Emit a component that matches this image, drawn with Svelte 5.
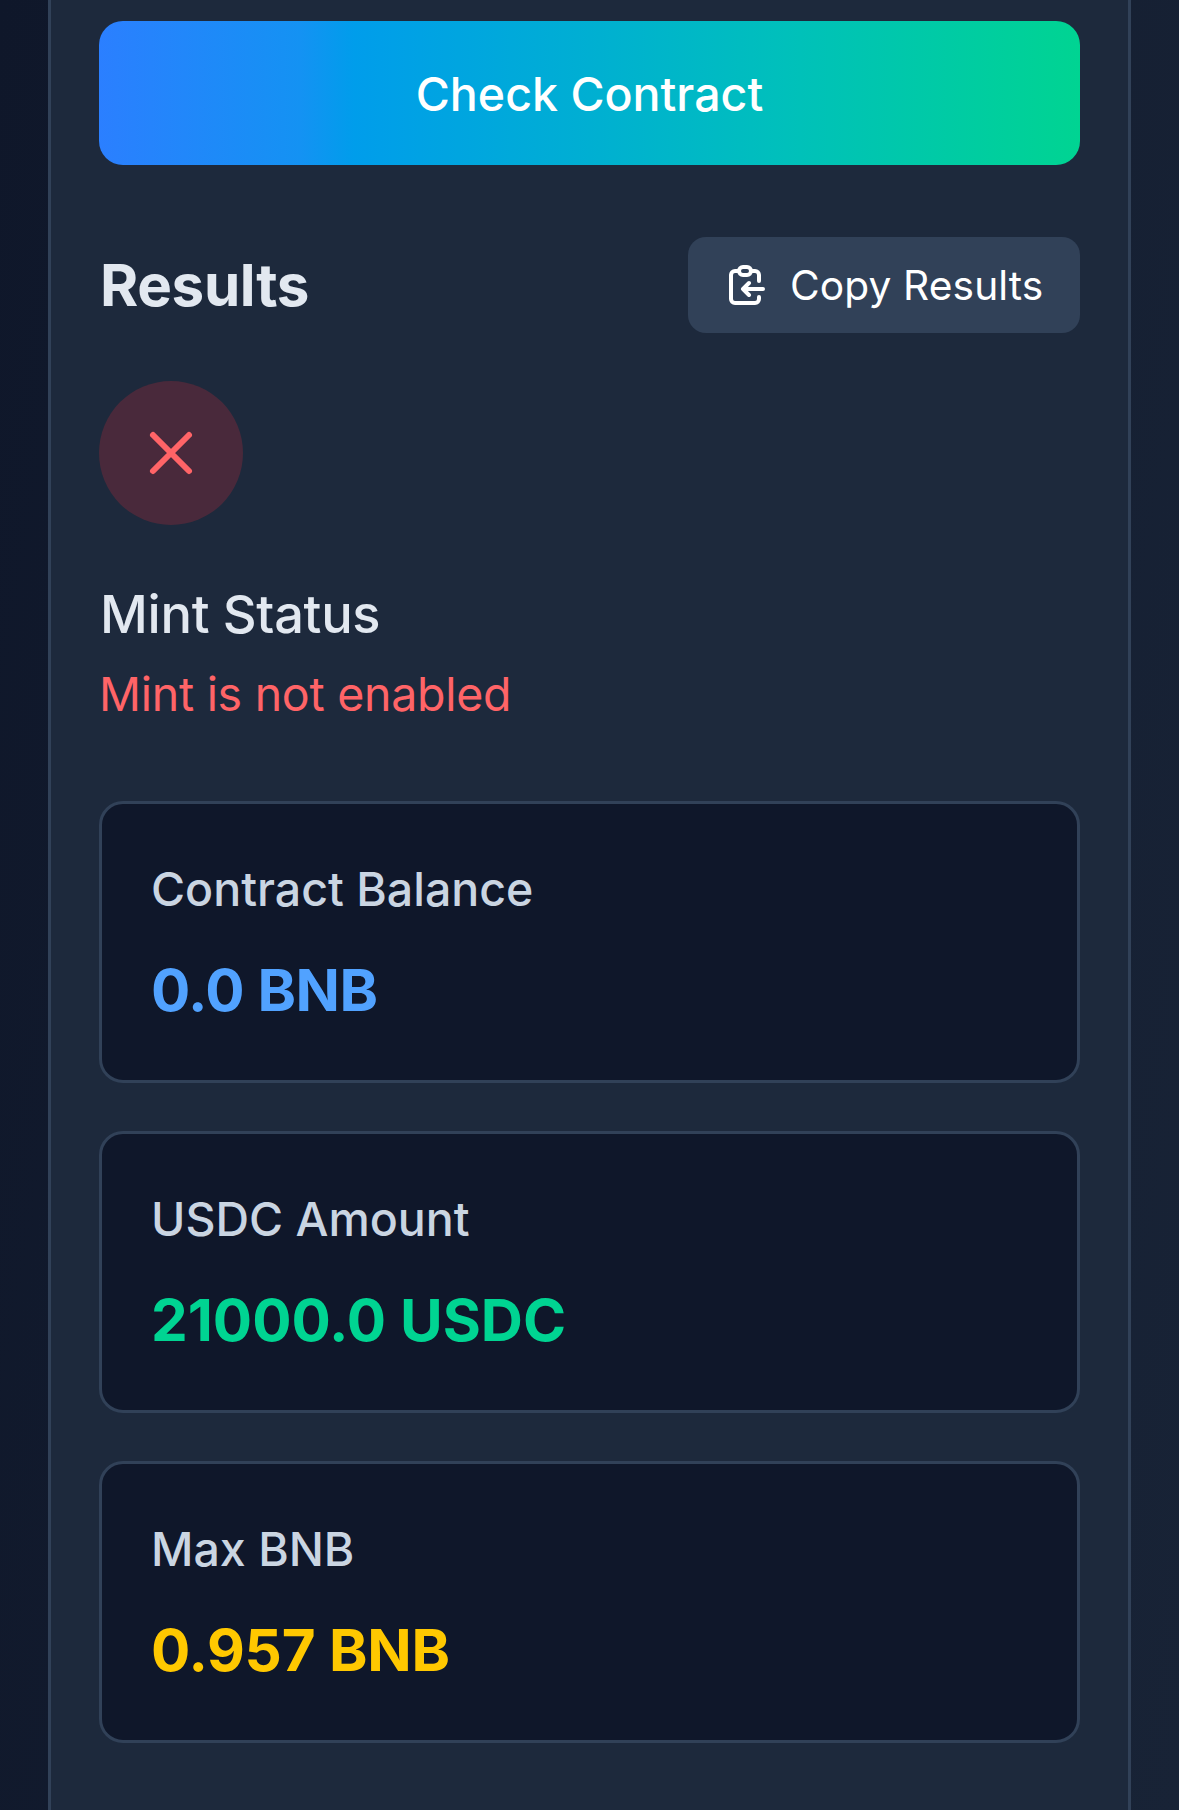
<script>
  const stats = [
    { label: 'Contract Balance', value: '0.0 BNB', tone: 'blue' },
    { label: 'USDC Amount', value: '21000.0 USDC', tone: 'green' },
    { label: 'Max BNB', value: '0.957 BNB', tone: 'yellow' },
  ];
</script>

<div class="page">
  <main class="panel">
    <button class="check">Check Contract</button>

    <div class="head">
      <h2>Results</h2>
      <button class="copy">
        <svg viewBox="0 0 24 24" width="48" height="48" aria-hidden="true">
          <path d="M9 5H7a2 2 0 0 0-2 2v12a2 2 0 0 0 2 2h10a2 2 0 0 0 2-2v-1" />
          <path d="M19 10V7a2 2 0 0 0-2-2h-2" />
          <rect x="9" y="3" width="6" height="4" rx="2" />
          <path d="M21 14H11M14 11l-3 3 3 3" />
        </svg>
        <span>Copy Results</span>
      </button>
    </div>

    <div class="badge">
      <svg viewBox="0 0 24 24" width="72" height="72" aria-hidden="true">
        <path d="M18 6 6 18M6 6l12 12" />
      </svg>
    </div>

    <h3>Mint Status</h3>
    <p class="status">Mint is not enabled</p>

    <div class="stats">
      {#each stats as stat}
        <section class="stat">
          <h4>{stat.label}</h4>
          <p class="value {stat.tone}">{stat.value}</p>
        </section>
      {/each}
    </div>
  </main>
</div>

<style>
  :global(body) {
    margin: 0;
    background: #0f172b;
  }
  .page {
    box-sizing: border-box;
    height: 1810px;
    padding: 0 48px;
    overflow: hidden;
    background: linear-gradient(100deg, #0f172a, #182336);
    font-family: Inter, 'Liberation Sans', sans-serif;
  }
  .panel {
    box-sizing: border-box;
    height: 100%;
    padding: 21px 48px 0;
    border: solid #314158;
    border-width: 0 3px;
    background: #1d293c;
  }
  h2, h3, h4, p {
    margin: 0;
  }
  button {
    border: 0;
    padding: 0;
    color: #fff;
    font-family: inherit;
  }
  svg {
    fill: none;
    stroke: currentColor;
    stroke-width: 2;
    stroke-linecap: round;
    stroke-linejoin: round;
  }
  .check {
    display: block;
    width: 100%;
    height: 144px;
    padding-top: 2px;
    border-radius: 24px;
    background: linear-gradient(to right, #2b7fff, #1492f3 20.5%, #009deb 26%, #00afd2 50%, #00c0bb 70%, #00d492);
    font-size: 46.5px;
    font-weight: 500;
  }
  .head {
    display: flex;
    align-items: center;
    justify-content: space-between;
    height: 96px;
    margin-top: 72px;
  }
  h2 {
    padding-left: 1px;
    color: #e2e8f0;
    font-size: 58.3px;
    font-weight: 700;
    letter-spacing: -0.35px;
  }
  .copy {
    display: flex;
    align-items: center;
    gap: 21px;
    box-sizing: border-box;
    width: 392px;
    height: 96px;
    padding-left: 33px;
    border-radius: 18px;
    background: #314158;
    font-size: 40.7px;
    letter-spacing: 0.1px;
    white-space: nowrap;
  }
  .badge {
    display: flex;
    align-items: center;
    justify-content: center;
    width: 144px;
    height: 144px;
    margin-top: 48px;
    border-radius: 50%;
    background: rgba(251, 44, 54, 0.2);
    color: #ff6467;
  }
  h3 {
    margin-top: 47px;
    padding-left: 1px;
    color: #e2e8f0;
    font-size: 52.4px;
    font-weight: 500;
    letter-spacing: -0.3px;
    line-height: 84px;
  }
  .status {
    margin-top: 2px;
    color: #ff6467;
    font-size: 46.5px;
    letter-spacing: -0.28px;
    line-height: 72px;
  }
  .stats {
    display: grid;
    gap: 48px;
    margin-top: 71px;
  }
  .stat {
    box-sizing: border-box;
    height: 282px;
    padding: 49px;
    border: 3px solid #314158;
    border-radius: 24px;
    background: #0f172a;
  }
  h4 {
    color: #cad5e2;
    font-size: 46.5px;
    font-weight: 500;
    line-height: 72px;
  }
  .value {
    margin-top: 23px;
    font-size: 58.3px;
    font-weight: 700;
    line-height: 84px;
  }
  .blue {
    color: #51a2ff;
    letter-spacing: -0.5px;
  }
  .green {
    color: #00d492;
  }
  .yellow {
    color: #ffc800;
    letter-spacing: -0.2px;
  }
</style>
